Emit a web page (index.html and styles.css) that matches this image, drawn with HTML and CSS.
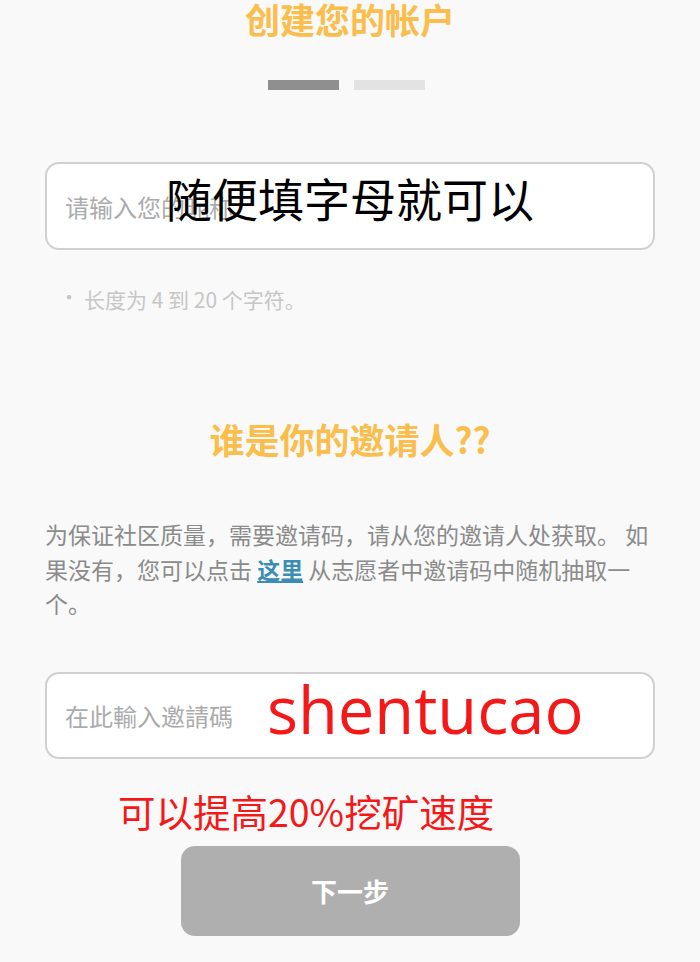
FILE: index.html
```html
<!DOCTYPE html>
<html lang="zh-CN">
<head>
    <meta charset="UTF-8">
    <meta name="viewport" content="width=device-width, initial-scale=1.0">
    <title>创建您的帐户</title>
    <link rel="stylesheet" href="styles.css">
</head>
<body>
    <div class="container">
        <h1 class="title">创建您的帐户</h1>

        <div class="steps">
            <span class="step active"></span>
            <span class="step"></span>
        </div>

        <div class="field field-name">
            <input class="text-input" type="text" placeholder="请输入您的昵称">
            <span class="note-black">随便填字母就可以</span>
        </div>

        <p class="hint"><span class="dot">•</span>长度为 4 到 20 个字符。</p>

        <h2 class="title title-invite">谁是你的邀请人??</h2>

        <p class="invite-text">
            为保证社区质量，需要邀请码，请从您的邀请人处获取。 如果没有，您可以点击 <a href="#" class="link">这里</a> 从志愿者中邀请码中随机抽取一个。
        </p>

        <div class="field field-code">
            <input class="text-input" type="text" placeholder="在此輸入邀請碼">
            <span class="note-code">shentucao</span>
        </div>

        <p class="note-red">可以提高20%挖矿速度</p>

        <button class="next-button" type="button">下一步</button>
    </div>
</body>
</html>
```

FILE: styles.css
```css
body {
    font-family: "Noto Sans CJK SC", "Noto Sans", sans-serif;
    background-color: #f9f9f9;
    margin: 0;
    padding: 0;
}
.container {
    padding: 0 45px;
    display: flex;
    flex-direction: column;
}
.title {
    margin: 0;
    text-align: center;
    color: #fbbd4c;
    font-size: 35px;
    line-height: 38px;
    font-weight: bold;
}
.steps {
    margin-top: 42px;
    padding-right: 8px;
    display: flex;
    justify-content: center;
    gap: 15px;
}
.step {
    width: 71px;
    height: 10px;
    background-color: #e3e3e3;
}
.step.active {
    background-color: #8f8f8f;
}
.field {
    position: relative;
}
.field-name {
    margin-top: 72px;
}
.text-input {
    box-sizing: border-box;
    width: 100%;
    height: 88px;
    padding: 0 18px;
    border: 2px solid #d0d0d0;
    border-radius: 14px;
    background-color: white;
    font-family: inherit;
    font-size: 24px;
    color: #333;
    outline: none;
}
.text-input::placeholder {
    color: #ababab;
}
.note-black {
    position: absolute;
    left: 121px;
    top: 10px;
    font-size: 46px;
    line-height: 50px;
    color: black;
}
.hint {
    margin: 33px 0 0;
    padding-left: 14px;
    font-size: 21px;
    line-height: 28px;
    color: #c6c6c6;
}
.dot {
    font-size: 20px;
    margin-right: 5px;
    vertical-align: 3px;
}
.title-invite {
    margin-top: 107px;
}
.invite-text {
    margin: 59px 0 0;
    font-size: 23px;
    line-height: 34.5px;
    color: #8b8b8b;
}
.link {
    color: #3b8db5;
    font-weight: bold;
    text-decoration: underline;
}
.field-code {
    margin-top: 51px;
}
.field-code .text-input {
    height: 87px;
}
.note-code {
    position: absolute;
    left: 222px;
    top: 5px;
    font-family: "Open Sans", sans-serif;
    font-size: 65px;
    line-height: 64px;
    color: #f51818;
}
.note-red {
    margin: 30px 0 0 73px;
    font-size: 37.5px;
    line-height: 44px;
    color: #f51818;
}
.next-button {
    align-self: center;
    margin-top: 13px;
    width: 339px;
    height: 90px;
    border: none;
    border-radius: 14px;
    background-color: #afafaf;
    color: white;
    font-family: inherit;
    font-size: 26px;
    font-weight: bold;
    cursor: pointer;
}
```
